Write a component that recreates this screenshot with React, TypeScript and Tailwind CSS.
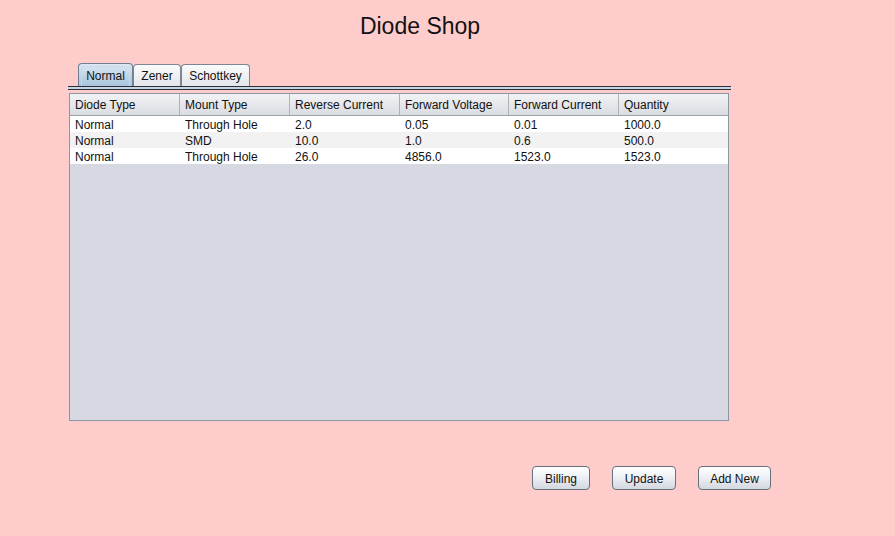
import React from "react";

const columns = [
  "Diode Type",
  "Mount Type",
  "Reverse Current",
  "Forward Voltage",
  "Forward Current",
  "Quantity",
];

const rows = [
  ["Normal", "Through Hole", "2.0", "0.05", "0.01", "1000.0"],
  ["Normal", "SMD", "10.0", "1.0", "0.6", "500.0"],
  ["Normal", "Through Hole", "26.0", "4856.0", "1523.0", "1523.0"],
];

const colWidths = ["w-[110px]", "w-[110px]", "w-[110px]", "w-[109px]", "w-[110px]", "w-[109px]"];

const tabs = [
  { label: "Normal", width: "w-[55px]", active: true },
  { label: "Zener", width: "w-[48px]", active: false },
  { label: "Schottkey", width: "w-[69px]", active: false },
];

function Tab({ label, width, active }: { label: string; width: string; active: boolean }) {
  if (active) {
    return (
      <div
        className={`${width} h-[23px] rounded-t-[4px] border border-b-0 border-[#6e7f91] bg-gradient-to-b from-[#dce8f3] to-[#a9c3dc] p-[2px] pb-0`}
      >
        <div className="h-full rounded-t-[2px] border border-b-0 border-[#c9dbeb] flex items-center justify-center pb-[1px] text-[12px] text-[#111]">
          {label}
        </div>
      </div>
    );
  }
  return (
    <div
      className={`${width} h-[22px] rounded-t-[4px] border border-b-0 border-[#7d8590] bg-gradient-to-b from-[#fafbfc] to-[#e3e6ea] flex items-center justify-center text-[12px] text-[#111]`}
    >
      {label}
    </div>
  );
}

function ShopButton({ label, width }: { label: string; width: string }) {
  return (
    <button
      className={`${width} h-[24px] pt-[2px] rounded-[4px] border border-[#67717c] bg-gradient-to-b from-[#ffffff] via-[#eceff3] to-[#d3d8df] text-[12px] text-[#111] shadow-[inset_0_1px_0_#ffffff]`}
    >
      {label}
    </button>
  );
}

export default function App() {
  return (
    <div
      className="w-[895px] h-[536px] bg-[#ffcccc] overflow-hidden"
      style={{ fontFamily: '"Liberation Sans", Arial, sans-serif' }}
    >
      <h1 className="w-[840px] pt-[12px] text-center text-[23px] leading-[28px] text-[#111]">
        Diode Shop
      </h1>

      <div className="ml-[68px] mt-[24px] w-[663px]">
        <div className="flex items-end pl-[10px] h-[22px]">
          {tabs.map((t) => (
            <Tab key={t.label} {...t} />
          ))}
        </div>
        <div className="h-[4px] border-t border-b border-[#2b2f36] bg-[#c6d6e6]" />

        <div className="ml-[1px] mt-[3px] w-[660px] h-[328px] border border-[#8d97a3] bg-[#d6d9e1] text-[12px] text-[#111]">
          <div className="flex h-[22px] border-b border-[#9aa1aa] bg-gradient-to-b from-[#f2f3f5] to-[#d9dce1]">
            {columns.map((c, i) => (
              <div
                key={c}
                className={`${colWidths[i]} flex items-center pl-[5px] ${
                  i < columns.length - 1 ? "border-r border-[#aeb3ba]" : ""
                }`}
              >
                {c}
              </div>
            ))}
          </div>
          {rows.map((r, ri) => (
            <div
              key={ri}
              className={`flex h-[16px] ${ri === 1 ? "bg-[#f2f2f2]" : "bg-white"}`}
            >
              {r.map((cell, ci) => (
                <div key={ci} className={`${colWidths[ci]} pl-[5px] pt-[1px] leading-[16px]`}>
                  {cell}
                </div>
              ))}
            </div>
          ))}
        </div>
      </div>

      <div className="flex gap-[22px] ml-[532px] mt-[45px]">
        <ShopButton label="Billing" width="w-[58px]" />
        <ShopButton label="Update" width="w-[64px]" />
        <ShopButton label="Add New" width="w-[73px]" />
      </div>
    </div>
  );
}
